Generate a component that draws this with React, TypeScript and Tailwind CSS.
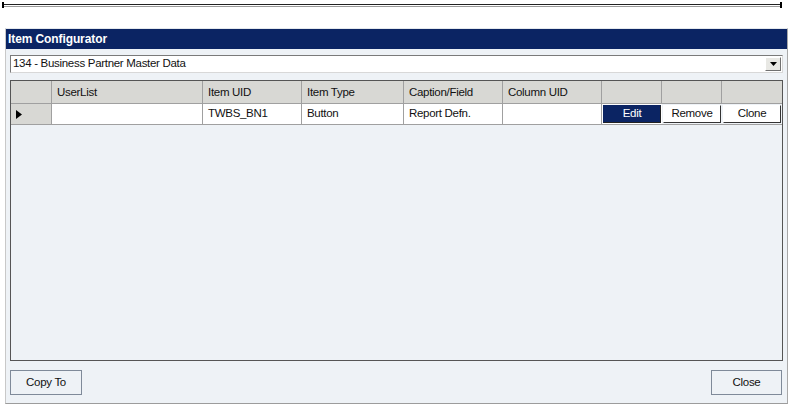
import { useState } from "react"

const cols = [
    { label: "UserList", w: "w-[151px]" },
    { label: "Item UID", w: "w-[99px]" },
    { label: "Item Type", w: "w-[102px]" },
    { label: "Caption/Field", w: "w-[99px]" },
    { label: "Column UID", w: "w-[99px]" },
]

const row = ["", "TWBS_BN1", "Button", "Report Defn.", ""]

export default function App() {
    const [selected] = useState("134 - Business Partner Master Data")

    return (
        <div className="w-[791px] h-[407px] bg-white overflow-hidden font-['Liberation_Sans',Arial,sans-serif] text-[11.5px] tracking-[-0.3px] text-[#111]">
            {/* ruler line */}
            <div className="flex items-center mt-[2px] ml-[2px] w-[780px] h-[6px]">
                <div className="w-[2px] h-[6px] bg-black" />
                <div className="flex-1 h-[3px] border-t border-[#222] border-b border-b-[#9a9a9a]" />
                <div className="w-[2px] h-[6px] bg-black" />
            </div>

            {/* window */}
            <div className="mt-[20px] ml-[5px] w-[783px] h-[376px] border border-[#c8c8c8] border-t-[#e4e8ec] border-r-[#a8a8a8] border-b-[#9c9c9c] bg-[#eef2f6] flex flex-col">
                <div className="h-[20px] bg-[#0b2463] text-white font-bold text-[12px] tracking-[-0.1px] flex items-center pl-[2px]">
                    Item Configurator
                </div>

                <div className="flex-1 flex flex-col px-[4px] pt-[6px] pb-[6px]">
                    {/* dropdown */}
                    <div className="h-[18px] bg-white border border-[#7a7a7a] border-r-[#d8d8d8] border-b-[#d8d8d8] flex items-center">
                        <span className="pl-[2px] flex-1 leading-none">{selected}</span>
                        <div className="w-[16px] h-[14px] mr-[1px] bg-[#e8e8e4] border border-white border-r-[#707070] border-b-[#707070] flex items-center justify-center">
                            <svg width="7" height="4" viewBox="0 0 7 4">
                                <path d="M0 0h7L3.5 4z" fill="#000" />
                            </svg>
                        </div>
                    </div>

                    {/* grid */}
                    <div className="mt-[7px] h-[281px] border border-[#555] bg-[#eef2f6] flex flex-col">
                        <div className="flex h-[23px] bg-[#d8d8d4] border-b border-[#a0a0a0]">
                            <div className="w-[41px] border-r border-[#a0a0a0]" />
                            {cols.map((c) => (
                                <div key={c.label} className={`${c.w} border-r border-[#a0a0a0] flex items-center pl-[5px] pt-[2px]`}>
                                    {c.label}
                                </div>
                            ))}
                            <div className="w-[60px] border-r border-[#a0a0a0]" />
                            <div className="w-[60px] border-r border-[#a0a0a0]" />
                            <div className="flex-1" />
                        </div>
                        <div className="flex h-[21px] border-b border-[#a0a0a0]">
                            <div className="w-[41px] bg-[#d8d8d4] border-r border-[#a0a0a0] flex items-center pl-[5px]">
                                <svg width="6" height="9" viewBox="0 0 6 9">
                                    <path d="M0 0l6 4.5L0 9z" fill="#000" />
                                </svg>
                            </div>
                            {cols.map((c, i) => (
                                <div key={c.label} className={`${c.w} bg-white border-r border-[#a0a0a0] flex items-center pl-[5px]`}>
                                    {row[i]}
                                </div>
                            ))}
                            <div className="w-[60px] p-[1px] bg-white">
                                <div className="h-full bg-[#0b2463] text-white border border-[#0b2463] border-r-[#222] border-b-[#222] flex items-center justify-center">
                                    Edit
                                </div>
                            </div>
                            <div className="w-[60px] p-[1px] bg-[#eef2f6]">
                                <div className="h-full bg-white border border-white border-r-[#333] border-b-[#333] flex items-center justify-center">
                                    Remove
                                </div>
                            </div>
                            <div className="w-[60px] p-[1px] bg-[#eef2f6]">
                                <div className="h-full bg-white border border-white border-r-[#333] border-b-[#333] flex items-center justify-center">
                                    Clone
                                </div>
                            </div>
                        </div>
                    </div>

                    {/* footer buttons */}
                    <div className="mt-[9px] flex justify-between">
                        <button className="w-[72px] h-[25px] bg-[#eef2f6] border border-[#7f8a99] flex items-center justify-center">
                            Copy To
                        </button>
                        <button className="w-[71px] h-[25px] mr-[1px] bg-[#eef2f6] border border-[#7f8a99] flex items-center justify-center">
                            Close
                        </button>
                    </div>
                </div>
            </div>
        </div>
    )
}
